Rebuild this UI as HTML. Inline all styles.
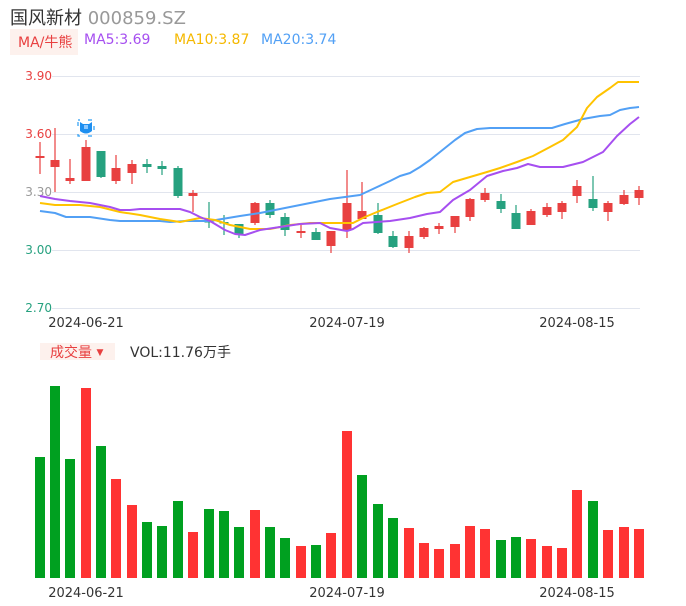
<!DOCTYPE html>
<html><head><meta charset="utf-8"><style>
html,body{margin:0;padding:0;background:#fff;width:686px;height:606px;overflow:hidden;font-family:"DejaVu Sans","Noto Sans CJK SC",sans-serif}
.t{position:absolute;white-space:nowrap}
</style></head><body>
<div class="t" style="left:10px;top:4px;font-size:18px;color:#333">国风新材 <span style="color:#999">000859.SZ</span></div>
<div class="t" style="left:10px;top:29px;width:68px;height:26px;background:#fdf1ed"></div>
<div class="t" style="left:18px;top:32px;font-size:14px;color:#e84040">MA/牛熊</div>
<div class="t" style="left:84px;top:32px;font-size:14px;color:#a64ff0">MA5:3.69</div>
<div class="t" style="left:174px;top:32px;font-size:14px;color:#f5b800">MA10:3.87</div>
<div class="t" style="left:261px;top:32px;font-size:14px;color:#52a0f5">MA20:3.74</div>
<div class="t" style="left:40px;top:343px;width:75px;height:17px;background:#fdf1ed"></div>
<div class="t" style="left:50px;top:342px;font-size:14px;color:#e84040">成交量 <span style="font-size:9px;vertical-align:2px">▼</span></div>
<div class="t" style="left:130px;top:342px;font-size:14px;color:#333">VOL:11.76万手</div>
<svg id="s" width="686" height="606" style="position:absolute;left:0;top:0" xmlns="http://www.w3.org/2000/svg">
<g stroke="#e1e5ee" stroke-width="1">
<line x1="52" y1="76.5" x2="640" y2="76.5"/><line x1="52" y1="134.5" x2="640" y2="134.5"/><line x1="52" y1="192.5" x2="640" y2="192.5"/><line x1="52" y1="250.5" x2="640" y2="250.5"/><line x1="52" y1="308.5" x2="640" y2="308.5"/>
</g>
<g font-size="12" font-family="DejaVu Sans,sans-serif" text-anchor="end">
<text x="52" y="80" fill="#e84040">3.90</text><text x="52" y="138" fill="#e84040">3.60</text><text x="52" y="196" fill="#999">3.30</text><text x="52" y="254" fill="#26a17f">3.00</text><text x="52" y="312" fill="#26a17f">2.70</text>
</g>
<g font-size="13" fill="#333" font-family="DejaVu Sans,sans-serif" text-anchor="middle">
<text x="86" y="327">2024-06-21</text><text x="347" y="327">2024-07-19</text><text x="577" y="327">2024-08-15</text>
<text x="86" y="597">2024-06-21</text><text x="347" y="597">2024-07-19</text><text x="577" y="597">2024-08-15</text>
</g>
<g id="c"></g>
<g fill="none" stroke-width="2" stroke-linejoin="round">
<polyline stroke="#52a0f5" points="40,211 55,213 66,217 90,217 110,220 120,221 160,221 170,222 185,221 210,221 240,216 260,213 280,209 300,205 315,202 330,199 345,197 360,195 375,188 390,181 400,176 410,173 420,167 430,160 440,152 455,140 465,133 477,129 490,128 552,128 565,124 583,119 600,116 610,115 620,110 630,108 639,107"/>
<polyline stroke="#ffc300" points="40,203 55,205 80,205 100,207 120,212 140,215 160,219 180,222 200,218 215,220 230,225 250,229 270,229 290,225 310,223 353,223 365,217 377,212 397,204 415,197 427,193 440,192 453,182 470,177 487,172 500,168 517,162 533,156 550,147 563,140 577,127 587,108 597,97 610,88 618,82 639,82"/>
<polyline stroke="#a64ff0" points="40,196 55,199 70,201 90,203 110,207 120,210 130,210 140,209 180,209 190,212 200,217 210,221 225,230 235,234 245,235 260,230 280,227 300,224 320,223 330,228 347,231 353,229 363,223 390,221 410,218 427,214 440,212 453,200 470,190 487,176 503,171 517,168 528,164 540,167 563,167 583,162 603,152 617,136 630,124 639,117"/>
</g>
<g transform="translate(86,128)">
<rect x="-8" y="-8" width="16" height="16" fill="none" stroke="#2a9df4" stroke-width="1.2" stroke-dasharray="4 8" stroke-dashoffset="2"/>
<path d="M-6,-6 L-3,-4 L3,-4 L6,-6 L6,3 Q0,8 -6,3 Z" fill="#1e8ff0"/>
<rect x="-2" y="-3" width="4" height="4" fill="#8cc8ff"/>
</g>
</svg>
<script>
var C=[[40,'r',156,158,142,174],[55,'r',160,167,128,192],[70,'r',178,181,159,184],[86,'r',147,181,140,181],[101,'g',151,177,151,178],[116,'r',168,181,155,184],[132,'r',164,173,160,184],[147,'g',164,167,159,173],[162,'g',166,169,161,175],[178,'g',168,196,166,198],[193,'r',193,196,190,212],[209,'g',221,221,202,228],[224,'g',222,223,215,235],[239,'g',224,234,224,238],[255,'r',203,223,202,225],[270,'g',203,215,200,218],[285,'g',217,230,213,236],[301,'r',231,233,225,238],[316,'g',232,240,228,240],[331,'r',231,246,231,253],[347,'r',203,230,170,238],[362,'r',211,219,182,219],[378,'g',215,233,203,234],[393,'g',236,247,231,248],[409,'r',236,248,231,253],[424,'r',228,237,227,239],[439,'r',226,229,223,234],[455,'r',216,227,216,233],[470,'r',199,217,198,221],[485,'r',193,200,188,202],[501,'g',201,209,194,213],[516,'g',213,229,205,229],[531,'r',211,225,209,225],[547,'r',207,215,203,217],[562,'r',203,212,201,219],[577,'r',186,196,180,203],[593,'g',199,208,176,211],[608,'r',203,212,201,221],[624,'r',195,204,190,205],[639,'r',190,198,186,205]];
var V=[457,386,459,388,446,479,505,522,526,501,532,509,511,527,510,527,538,546,545,533,431,475,504,518,528,543,549,544,526,529,540,537,539,546,548,490,501,530,527,529];
var vc=['g','g','g','r','g','r','r','g','g','g','r','g','g','g','r','g','g','r','g','r','r','g','g','g','r','r','r','r','r','r','g','g','r','r','r','r','g','r','r','r'];
var h='';
C.forEach(function(c,i){var col=c[1]=='r'?'#e84040':'#26a17f';
h+='<line x1="'+c[0]+'" x2="'+c[0]+'" y1="'+c[4]+'" y2="'+c[5]+'" stroke="'+col+'" stroke-width="1.2"/>';
var bh=Math.max(c[3]-c[2],1.5);h+='<rect x="'+(c[0]-4.5)+'" y="'+c[2]+'" width="9" height="'+bh+'" fill="'+col+'"/>';
var vx=c[0]-5;h+='<rect x="'+vx+'" y="'+V[i]+'" width="10" height="'+(578-V[i])+'" fill="'+(vc[i]=='r'?'#ff3333':'#00a020')+'"/>';});
document.getElementById('c').innerHTML=h;
</script>
</body></html>
